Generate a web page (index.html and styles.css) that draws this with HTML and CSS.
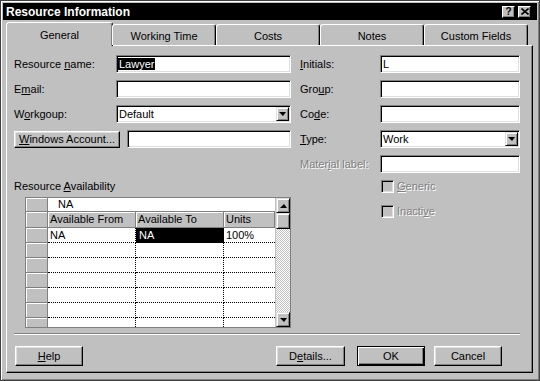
FILE: index.html
```html
<!DOCTYPE html>
<html lang="en">
<head>
  <meta charset="UTF-8">
  <title>Resource Information</title>
  <link rel="stylesheet" href="styles.css">
</head>
<body>
  <div class="window">
    <!-- TITLE BAR -->
    <div class="titlebar">
      <span class="title">Resource Information</span>
      <div class="cap-btns">
        <span class="cap-btn">?</span>
        <span class="cap-btn">
          <svg width="8" height="7" viewBox="0 0 8 7"><path d="M0.5 0.5 L7.5 6.5 M7.5 0.5 L0.5 6.5" stroke="#000" stroke-width="1.6"/></svg>
        </span>
      </div>
    </div>

    <div class="body">
      <div class="tabs">
        <div class="tab active">General</div>
        <div class="tab">Working Time</div>
        <div class="tab">Costs</div>
        <div class="tab">Notes</div>
        <div class="tab">Custom Fields</div>
      </div>

      <div class="panel">
        <div class="columns">
          <!-- LEFT -->
          <div class="col-left">
            <div class="row">
              <span class="lbl">Resource <u>n</u>ame:</span>
              <div class="field"><span class="sel">Lawyer</span></div>
            </div>
            <div class="row">
              <span class="lbl">E<u>m</u>ail:</span>
              <div class="field"></div>
            </div>
            <div class="row">
              <span class="lbl">W<u>o</u>rkgoup:</span>
              <div class="field">Default<span class="drop"><span class="arrow"></span></span></div>
            </div>
            <div class="row">
              <button class="btn account"><u>W</u>indows Account...</button>
              <div class="field"></div>
            </div>

            <div class="avail-label">Resource <u>A</u>vailability</div>
            <div class="sheet">
              <div class="datagrid">
                <div class="rh"></div>
                <div class="edit">NA</div>

                <div class="rh"></div>
                <div class="hd">Available From</div>
                <div class="hd">Available To</div>
                <div class="hd">Units</div>

                <div class="rh"></div><div class="c">NA</div><div class="c cur">NA</div><div class="c last">100%</div>
                <div class="rh"></div><div class="c"></div><div class="c"></div><div class="c last"></div>
                <div class="rh"></div><div class="c"></div><div class="c"></div><div class="c last"></div>
                <div class="rh"></div><div class="c"></div><div class="c"></div><div class="c last"></div>
                <div class="rh"></div><div class="c"></div><div class="c"></div><div class="c last"></div>
                <div class="rh"></div><div class="c"></div><div class="c"></div><div class="c last"></div>
                <div class="rh"></div><div class="c"></div><div class="c"></div><div class="c last"></div>
              </div>
              <div class="scroll">
                <span class="sb-btn"><span class="arrow up"></span></span>
                <span class="sb-thumb"></span>
                <span class="sb-track"></span>
                <span class="sb-btn"><span class="arrow"></span></span>
              </div>
            </div>
          </div>

          <!-- RIGHT -->
          <div class="col-right">
            <div class="row">
              <span class="lbl"><u>I</u>nitials:</span>
              <div class="field">L</div>
            </div>
            <div class="row">
              <span class="lbl">Gro<u>u</u>p:</span>
              <div class="field"></div>
            </div>
            <div class="row">
              <span class="lbl">Co<u>d</u>e:</span>
              <div class="field"></div>
            </div>
            <div class="row">
              <span class="lbl"><u>T</u>ype:</span>
              <div class="field">Work<span class="drop"><span class="arrow"></span></span></div>
            </div>
            <div class="row">
              <span class="lbl disabled">Mater<u>i</u>al label:</span>
              <div class="field"></div>
            </div>
            <div class="check-row">
              <span class="box"></span><span class="disabled"><u>G</u>eneric</span>
            </div>
            <div class="check-row">
              <span class="box"></span><span class="disabled">Inacti<u>v</u>e</span>
            </div>
          </div>
        </div>

        <div class="sep"></div>

        <div class="buttons">
          <button class="btn help"><u>H</u>elp</button>
          <span class="spacer"></span>
          <button class="btn details">D<u>e</u>tails...</button>
          <button class="btn ok">OK</button>
          <button class="btn cancel">Cancel</button>
        </div>
      </div>
    </div>
  </div>
</body>
</html>
```

FILE: styles.css
```css
* {
  box-sizing: border-box;
}
body {
  margin: 0;
  background: #c0c0c0;
  font-family: "Liberation Sans", Arial, sans-serif;
  font-size: 11px;
  color: #000;
}
u {
  text-decoration: underline;
  text-underline-offset: 1px;
}
.window {
  width: 540px;
  height: 381px;
  border: 1px solid #404040;
  box-shadow: inset 1px 1px #fff, inset -1px -1px #808080;
  padding: 2px;
  background: #c0c0c0;
}

/* title bar */
.titlebar {
  height: 17px;
  background: #000;
  color: #fff;
  display: flex;
  align-items: center;
  justify-content: space-between;
  padding: 0 6px 0 3px;
}
.title {
  font-weight: bold;
  font-size: 12px;
}
.cap-btns {
  display: flex;
  gap: 3px;
}
.cap-btn {
  width: 13px;
  height: 12px;
  background: #c0c0c0;
  color: #000;
  border: 1px solid;
  border-color: #fff #000 #000 #fff;
  box-shadow: inset -1px -1px #808080;
  font-weight: bold;
  font-size: 10px;
  line-height: 10px;
  display: flex;
  justify-content: center;
  align-items: center;
}

/* tabs */
.body {
  padding: 2px 4px 0 3px;
}
.tabs {
  display: flex;
  height: 23px;
  padding-left: 2px;
  position: relative;
  z-index: 1;
}
.tab {
  width: 104px;
  height: 21px;
  margin-top: 2px;
  border: 1px solid;
  border-bottom: none;
  border-color: #fff #000 transparent #fff;
  border-radius: 3px 3px 0 0;
  box-shadow: inset -1px 0 #808080;
  text-align: center;
  line-height: 22px;
}
.tab.active {
  width: 107px;
  height: 24px;
  margin: 0 -1px -1px -2px;
  background: #c0c0c0;
  line-height: 24px;
}

/* panel */
.panel {
  height: 328px;
  border: 1px solid;
  border-color: #fff #000 #000 #fff;
  box-shadow: inset -1px -1px #808080;
  padding: 9px 11px 0 7px;
}
.columns {
  display: flex;
  gap: 9px;
  height: 272px;
}
.col-left {
  width: 277px;
}
.col-right {
  width: 220px;
}
.row {
  display: flex;
  align-items: center;
  height: 18px;
  margin-bottom: 7px;
}
.lbl {
  width: 102px;
}
.col-right .lbl {
  width: 80px;
}
.field {
  flex: 1;
  height: 18px;
  background: #fff;
  border: 1px solid;
  border-color: #808080 #fff #fff #808080;
  box-shadow: inset 1px 1px #000, inset -1px -1px #dfdfdf;
  padding: 1px 1px 1px 2px;
  display: flex;
  align-items: center;
  white-space: nowrap;
}
.sel {
  background: #000;
  color: #fff;
  padding: 0 1px;
  margin-left: -1px;
}
.drop {
  margin-left: auto;
  width: 13px;
  height: 14px;
  background: #c0c0c0;
  border: 1px solid;
  border-color: #dfdfdf #000 #000 #dfdfdf;
  box-shadow: inset 1px 1px #fff, inset -1px -1px #808080;
  display: flex;
  justify-content: center;
  align-items: center;
}
.arrow {
  width: 0;
  height: 0;
  border-left: 4px solid transparent;
  border-right: 3px solid transparent;
  border-top: 4px solid #000;
}
.arrow.up {
  border-top: none;
  border-bottom: 4px solid #000;
}

/* buttons */
.btn {
  height: 20px;
  padding: 0;
  background: #c0c0c0;
  font-family: inherit;
  font-size: 11px;
  color: #000;
  border: 1px solid;
  border-color: #fff #000 #000 #fff;
  box-shadow: inset -1px -1px #808080, inset 1px 1px #dfdfdf;
}
.account {
  width: 106px;
  height: 17px;
  margin-right: 7px;
}

/* availability sheet */
.avail-label {
  margin-top: 31px;
  height: 14px;
  line-height: 14px;
}
.sheet {
  margin: 4px 0 0 11px;
  width: 266px;
  height: 131px;
  border: 1px solid #808080;
  display: flex;
  overflow: hidden;
  background: #fff;
}
.datagrid {
  width: 249px;
  display: grid;
  grid-template-columns: 22px 88px 88px 51px;
  grid-template-rows: 14px 16px;
  grid-auto-rows: 15px;
  align-content: start;
}
.rh,
.hd {
  background: #c0c0c0;
  border-right: 1px solid #808080;
  border-bottom: 1px solid #808080;
  box-shadow: inset 1px 1px #fff;
}
.hd {
  padding-left: 2px;
  line-height: 15px;
}
.edit {
  grid-column: span 3;
  border-bottom: 1px solid #808080;
  padding-left: 10px;
  line-height: 13px;
}
.c {
  border-right: 1px dotted #000;
  border-bottom: 1px dotted #000;
  padding-left: 2px;
  line-height: 14px;
  white-space: nowrap;
  overflow: hidden;
}
.c.last {
  border-right: none;
}
.c.cur {
  background: #000;
  color: #fff;
  border: 1px solid #000;
  line-height: 12px;
}
.scroll {
  width: 15px;
  display: flex;
  flex-direction: column;
  background: repeating-conic-gradient(#fff 0 25%, #c0c0c0 0 50%) 0 0 / 2px 2px;
  border-left: 1px solid #c0c0c0;
}
.sb-btn,
.sb-thumb {
  background: #c0c0c0;
  border: 1px solid;
  border-color: #dfdfdf #000 #000 #dfdfdf;
  box-shadow: inset 1px 1px #fff, inset -1px -1px #808080;
}
.sb-btn {
  height: 15px;
  display: flex;
  justify-content: center;
  align-items: center;
}
.sb-thumb {
  height: 16px;
}
.sb-track {
  flex: 1;
}

/* right checkboxes */
.check-row {
  display: flex;
  align-items: flex-start;
  height: 18px;
  margin-bottom: 7px;
  padding-left: 81px;
  line-height: 13px;
}
.box {
  width: 13px;
  height: 13px;
  background: #c0c0c0;
  border: 1px solid;
  border-color: #808080 #fff #fff #808080;
  box-shadow: inset 1px 1px #000, inset -1px -1px #dfdfdf;
  margin-right: 3px;
}
.disabled {
  color: #808080;
  text-shadow: 1px 1px #fff;
}

/* bottom */
.sep {
  margin-top: 6px;
  width: 506px;
  height: 2px;
  border-top: 1px solid #808080;
  border-bottom: 1px solid #fff;
}
.buttons {
  display: flex;
  margin-top: 11px;
  width: 506px;
}
.help {
  width: 68px;
  margin-left: 1px;
}
.spacer {
  flex: 1;
}
.details {
  width: 69px;
  margin-right: 12px;
}
.ok {
  width: 68px;
  margin-right: 9px;
  border-color: #000;
  box-shadow: inset 1px 1px #fff, inset -1px -1px #000, inset -2px -2px #808080;
}
.cancel {
  width: 68px;
  margin-right: 18px;
}
```
